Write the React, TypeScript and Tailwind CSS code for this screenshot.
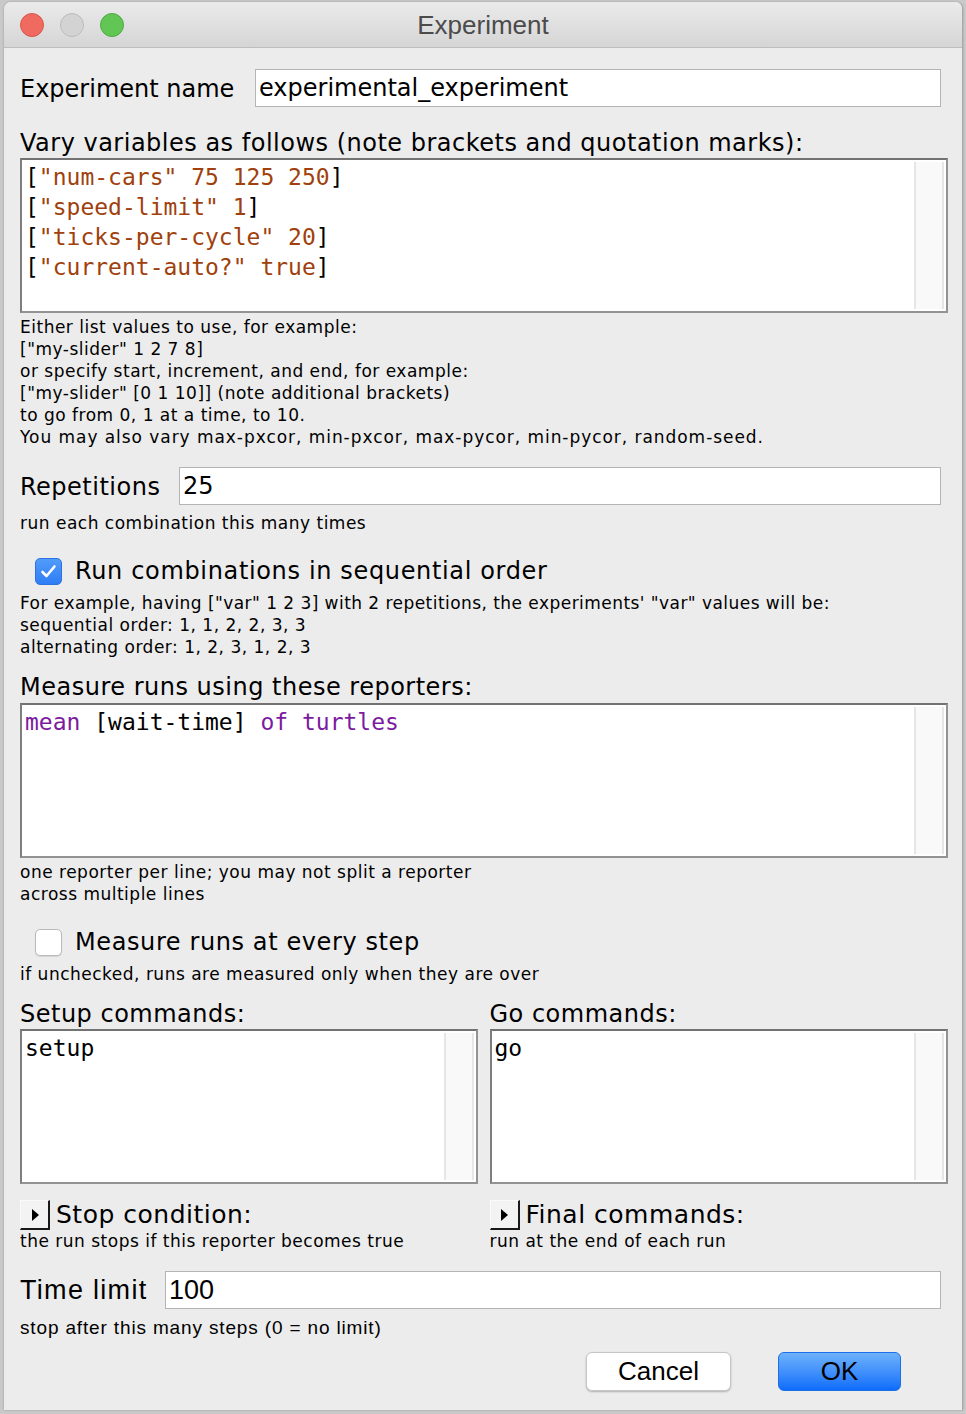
import React from "react";

const SANS = "font-['DejaVu_Sans',sans-serif]";
const MONO = "font-['DejaVu_Sans_Mono',monospace]";
const HEL = "font-['Liberation_Sans',Arial,sans-serif]";

function CodeBox({ className = "", children }: { className?: string; children?: React.ReactNode }) {
  return (
    <div className={`flex h-[155px] border-2 border-[#939393] border-t-[#727272] border-l-[#7e7e7e] bg-white ${className}`}>
      <div className={`flex-1 pl-[3px] pt-[2px] ${MONO} text-[23px] leading-[30px] text-black whitespace-pre`}>{children}</div>
      <div className="w-[30px] my-[2px] mr-[2px] bg-[#f9f9f9] border-l-2 border-r-2 border-[#e6e6e6]" />
    </div>
  );
}

function Help({ children, className = "" }: { children: React.ReactNode; className?: string }) {
  return <div className={`${SANS} text-[17px] leading-[22px] tracking-[0.5px] text-black ${className}`}>{children}</div>;
}

function Label({ children, className = "" }: { children: React.ReactNode; className?: string }) {
  return <div className={`${SANS} text-[24px] leading-[28px] tracking-[0.5px] text-black ${className}`}>{children}</div>;
}

function Input({ value, font = SANS, size = "text-[24px]" }: { value: string; font?: string; size?: string }) {
  return (
    <div className={`flex-1 mr-[7px] h-[38px] bg-white border border-[#b4b4b4] flex items-center pl-[3px] ${font} ${size} text-black`}>
      {value}
    </div>
  );
}

function Disclosure() {
  return (
    <div className="w-[30px] h-[30px] bg-[#f3f3f3] border-t border-l border-[#fafafa] border-r-2 border-b-2 border-r-[#1a1a1a] border-b-[#1a1a1a] flex items-center justify-center">
      <svg width="12" height="16" viewBox="0 0 12 16">
        <polygon points="3,2 10,8 3,14" fill="#000" />
      </svg>
    </div>
  );
}

export default function App() {
  const s = "text-[#a0410d]";
  const k = "text-[#7c1aa0]";
  return (
    <div className="w-[966px] h-[1414px] bg-[#c9c9c9] overflow-hidden">
      <div className="ml-[4px] mt-[2px] w-[959px] h-[1408px] rounded-t-[7px] overflow-hidden bg-[#ececec] border-r border-[#a8a8a8] shadow-[0_0_2px_rgba(0,0,0,0.3)]">
        {/* title bar */}
        <div className="relative h-[46px] bg-gradient-to-b from-[#ebebeb] to-[#d5d5d5] border-b border-[#bdbdbd] flex items-center">
          <div className="flex items-center gap-[16px] pl-[16px]">
            <div className="w-[24px] h-[24px] rounded-full bg-[#ef6b60] border border-[#d8564b]" />
            <div className="w-[24px] h-[24px] rounded-full bg-[#d3d3d3] border border-[#bcbcbc]" />
            <div className="w-[24px] h-[24px] rounded-full bg-[#62c655] border border-[#4ea942]" />
          </div>
          <div className={`absolute left-0 right-0 top-0 h-[46px] flex items-center justify-center ${HEL} text-[26px] text-[#4b4b4b] pointer-events-none`}>
            Experiment
          </div>
        </div>

        {/* body */}
        <div className="pl-[16px] pr-[14px]">
          <div className="mt-[21px] flex items-center h-[38px]">
            <Label className="w-[235px] shrink-0 tracking-[0px] pt-[2px]">Experiment name</Label>
            <Input value="experimental_experiment" />
          </div>

          <Label className="mt-[22px]">Vary variables as follows (note brackets and quotation marks):</Label>
          <CodeBox className="mt-[1px]">
            <div>[<span className={s}>"num-cars" 75 125 250</span>]</div>
            <div>[<span className={s}>"speed-limit" 1</span>]</div>
            <div>[<span className={s}>"ticks-per-cycle" 20</span>]</div>
            <div>[<span className={s}>"current-auto?" true</span>]</div>
          </CodeBox>

          <Help className="mt-[3px]">
            <div>Either list values to use, for example:</div>
            <div>["my-slider" 1 2 7 8]</div>
            <div>or specify start, increment, and end, for example:</div>
            <div>["my-slider" [0 1 10]] (note additional brackets)</div>
            <div>to go from 0, 1 at a time, to 10.</div>
            <div className="tracking-[0.95px]">You may also vary max-pxcor, min-pxcor, max-pycor, min-pycor, random-seed.</div>
          </Help>

          <div className="mt-[19px] flex items-center h-[38px]">
            <Label className="w-[159px] shrink-0 pt-[2px]">Repetitions</Label>
            <Input value="25" />
          </div>
          <Help className="mt-[7px]">run each combination this many times</Help>

          <div className="mt-[23px] flex items-center h-[28px] pl-[15px] gap-[13px]">
            <div className="w-[27px] h-[27px] rounded-[5px] bg-gradient-to-b from-[#519bf9] to-[#2f7df6] border border-[#2d72e0] flex items-center justify-center">
              <svg width="17" height="15" viewBox="0 0 17 15">
                <path d="M2.5 8 L6.5 12 L14.5 2.5" stroke="#fff" strokeWidth="2.6" fill="none" strokeLinecap="round" strokeLinejoin="round" />
              </svg>
            </div>
            <Label className="tracking-[0.65px]">Run combinations in sequential order</Label>
          </div>
          <Help className="mt-[7px]">
            <div className="tracking-[0.45px]">For example, having ["var" 1 2 3] with 2 repetitions, the experiments' "var" values will be:</div>
            <div>sequential order: 1, 1, 2, 2, 3, 3</div>
            <div>alternating order: 1, 2, 3, 1, 2, 3</div>
          </Help>

          <Label className="mt-[15px]">Measure runs using these reporters:</Label>
          <CodeBox className="mt-[2px]">
            <div><span className={k}>mean</span> [wait-time] <span className={k}>of turtles</span></div>
          </CodeBox>
          <Help className="mt-[3px]">
            <div>one reporter per line; you may not split a reporter</div>
            <div>across multiple lines</div>
          </Help>

          <div className="mt-[23px] flex items-center h-[28px] pl-[15px] gap-[13px]">
            <div className="w-[27px] h-[27px] rounded-[5px] bg-white border border-[#b9b9b9] shadow-[0_1px_1px_rgba(0,0,0,0.1)]" />
            <Label className="tracking-[0.6px]">Measure runs at every step</Label>
          </div>
          <Help className="mt-[7px] tracking-[0.5px]">if unchecked, runs are measured only when they are over</Help>

          <div className="mt-[15px] grid grid-cols-2 gap-x-[13px]">
            <div>
              <Label>Setup commands:</Label>
              <CodeBox className="mt-[1px]">
                <div>setup</div>
              </CodeBox>
              <div className="mt-[16px] flex items-center h-[30px] gap-[6px]">
                <Disclosure />
                <Label className="text-[25px] tracking-[0.1px]">Stop condition:</Label>
              </div>
              <Help className="tracking-[0.5px]">the run stops if this reporter becomes true</Help>
            </div>
            <div className="-ml-[1px]">
              <Label>Go commands:</Label>
              <CodeBox className="mt-[1px]">
                <div>go</div>
              </CodeBox>
              <div className="mt-[16px] flex items-center h-[30px] gap-[6px]">
                <Disclosure />
                <Label className="text-[25px] tracking-[0.1px]">Final commands:</Label>
              </div>
              <Help className="tracking-[0.5px]">run at the end of each run</Help>
            </div>
          </div>

          <div className="mt-[19px] flex items-center h-[38px]">
            <div className={`w-[145px] shrink-0 ${HEL} text-[27px] tracking-[1.3px] text-black`}>Time limit</div>
            <Input value="100" font={HEL} size="text-[27px]" />
          </div>
          <div className={`mt-[8px] ${HEL} text-[19px] leading-[22px] tracking-[0.85px] text-black`}>
            stop after this many steps (0 = no limit)
          </div>

          <div className="mt-[13px] flex justify-end pr-[47px] gap-[47px]">
            <div className={`w-[145px] h-[39px] rounded-[6px] bg-white border border-[#c6c6c6] shadow-[0_1px_2px_rgba(0,0,0,0.25)] flex items-center justify-center ${HEL} text-[26px] text-black`}>
              Cancel
            </div>
            <div className={`w-[123px] h-[39px] rounded-[6px] bg-gradient-to-b from-[#6db1fb] to-[#0a6cfa] border border-[#1d6fe6] flex items-center justify-center ${HEL} text-[26px] text-black`}>
              OK
            </div>
          </div>
        </div>
      </div>
    </div>
  );
}
